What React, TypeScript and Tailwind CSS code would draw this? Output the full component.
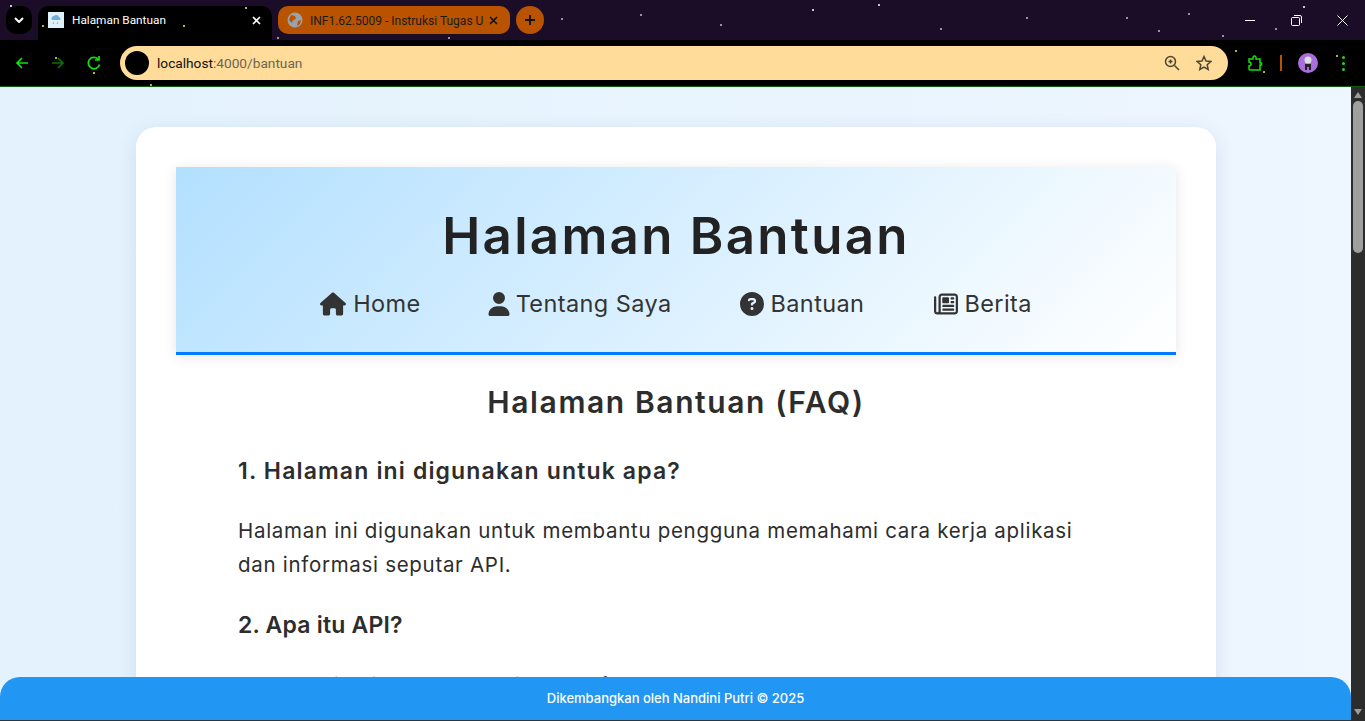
import { FaCircleQuestion, FaHouse, FaRegNewspaper, FaUser } from 'react-icons/fa6';

// stars behind the browser theme
const stars = [
    [10, 5, 'bg-white'], [42, 25, 'bg-[#e6f542]'], [97, 26, 'bg-[#e6f542]'], [183, 25, 'bg-[#e6f542]'], [245, 7, 'bg-[#e6f542]'],
    [55, 57, 'bg-[#e6f542]'], [93, 72, 'bg-[#e6f542]'], [150, 84, 'bg-[#e6f542]'], [1235, 50, 'bg-[#e6f542]'], [1263, 71, 'bg-[#e6f542]'], [1336, 55, 'bg-[#e6f542]'],
    [277, 37, 'bg-[#c9b8dc]'], [448, 37, 'bg-[#c9b8dc]'], [561, 18, 'bg-[#c9b8dc]'], [640, 14, 'bg-[#c9b8dc]'], [720, 24, 'bg-[#c9b8dc]'],
    [812, 9, 'bg-white'], [878, 4, 'bg-white'], [940, 28, 'bg-[#c9b8dc]'], [1026, 17, 'bg-[#c9b8dc]'], [1126, 17, 'bg-[#c9b8dc]'],
    [1158, 30, 'bg-[#c9b8dc]'], [1188, 13, 'bg-[#c9b8dc]'], [1222, 35, 'bg-[#c9b8dc]'], [1275, 28, 'bg-[#c9b8dc]'], [1303, 6, 'bg-white'],
] as const;

function TabBar() {
    return (
        <div className="flex h-10 shrink-0 items-start bg-[#1b0d28] pl-[6px] pt-[6px]">
            <div className="flex h-[28px] w-[26px] items-center justify-center rounded-[10px] bg-black">
                <svg width="10" height="6" viewBox="0 0 10 6" fill="none" stroke="white" strokeWidth="2"><path d="M1 1l4 4 4-4" /></svg>
            </div>
            <div className="ml-[6px] flex h-[34px] w-[234px] items-center rounded-t-[10px] bg-black pb-[6px] pl-[10px] pr-[11px]">
                <div className="flex h-4 w-4 items-center justify-center bg-[#dff1fb]">
                    <svg width="14" height="14" viewBox="0 0 14 14"><path d="M3 7a2.500 2.500 0 0 1 2-4 3 3 0 0 1 5 1 2 2 0 0 1 1 3z" fill="#6fb1d8" /><path d="M5 9l-1 2M9 9l-1 2" stroke="#e0a030" strokeWidth="1" /></svg>
                </div>
                <span className="ml-2 mt-px flex-1 font-['Roboto',sans-serif] text-[11.800px] text-white">Halaman Bantuan</span>
                <svg width="9" height="9" viewBox="0 0 9 9" stroke="white" strokeWidth="1.600"><path d="M1 1l7 7M8 1l-7 7" /></svg>
            </div>
            <div className="ml-[6px] flex h-[28px] w-[232px] items-center rounded-[10px] bg-[#b95300] pl-[9px] pr-[12px]">
                <svg width="16" height="16" viewBox="0 0 16 16"><circle cx="8" cy="8" r="7.500" fill="#9aa3ac" /><path d="M4 3l4 1 1 3-3 1-1 3-3-3zM11 9l3-1-1 4-3 2z" fill="#b95300" /></svg>
                <span className="ml-[7px] mt-px flex-1 overflow-hidden whitespace-nowrap font-['Roboto',sans-serif] text-xs text-[#1b1b1b]">INF1.62.5009 - Instruksi Tugas U</span>
                <svg width="9" height="9" viewBox="0 0 9 9" stroke="#111" strokeWidth="1.600"><path d="M1 1l7 7M8 1l-7 7" /></svg>
            </div>
            <div className="ml-[6px] flex h-[28px] w-[28px] items-center justify-center rounded-full bg-[#b95300]">
                <svg width="12" height="12" viewBox="0 0 12 12" stroke="#111" strokeWidth="1.800"><path d="M6 1v10M1 6h10" /></svg>
            </div>
            <div className="ml-auto flex items-center">
                <div className="flex h-[28px] w-[46px] items-center justify-center">
                    <span className="h-px w-[10px] bg-white" />
                </div>
                <div className="flex h-[28px] w-[46px] items-center justify-center">
                    <svg width="11" height="11" viewBox="0 0 11 11" fill="none" stroke="white"><rect x="0.5" y="2.5" width="8" height="8" rx="1" /><path d="M3 .5h6a1.500 1.500 0 0 1 1.500 1.500v6" /></svg>
                </div>
                <div className="flex h-[28px] w-[46px] items-center justify-center">
                    <svg width="11" height="11" viewBox="0 0 11 11" stroke="white"><path d="M.5.5l10 10M10.500.5l-10 10" /></svg>
                </div>
            </div>
        </div>
    );
}

function AddressBar() {
    return (
        <div className="flex h-[47px] shrink-0 items-start border-b border-[#0e5c0e] bg-black pt-[6px]">
            <div className="flex h-[34px] w-[120px] items-center pl-[14px] text-[#16e00e]">
                <svg width="16" height="16" viewBox="0 0 16 16" fill="none" stroke="currentColor" strokeWidth="1.700"><path d="M14 8H3M8 3L3 8l5 5" /></svg>
                <svg className="ml-[20px] opacity-50" width="16" height="16" viewBox="0 0 16 16" fill="none" stroke="currentColor" strokeWidth="1.700"><path d="M2 8h11M8 3l5 5-5 5" /></svg>
                <svg className="ml-[20px]" width="16" height="16" viewBox="0 0 16 16" fill="none" stroke="currentColor" strokeWidth="1.700"><path d="M13.500 9.500A5.700 5.700 0 1 1 12 4M13 1v4H9" /></svg>
            </div>
            <div className="flex h-[34px] w-[1108px] items-center rounded-full bg-[#ffdc9a] pl-[5px] pr-[16px]">
                <span className="h-6 w-6 rounded-full bg-black" />
                <span className="ml-2 flex-1 font-['Roboto',sans-serif] text-[13.700px] text-[#111]">
                    localhost<span className="text-[#6d6552]">:4000/bantuan</span>
                </span>
                <svg width="16" height="16" viewBox="0 0 16 16" fill="none" stroke="#4d4636" strokeWidth="1.500"><circle cx="6.500" cy="6.500" r="5" /><path d="M10.500 10.500L15 15M4.500 6.500h4M6.500 4.500v4" /></svg>
                <svg className="ml-[16px]" width="16" height="16" viewBox="0 0 16 16" fill="none" stroke="#4d4636" strokeWidth="1.500"><path d="M8 1.500l2 4.500 4.800.500-3.600 3.200 1 4.800L8 12.200 3.800 14.500l1-4.800L1.200 6.500 6 6z" /></svg>
            </div>
            <div className="flex h-[34px] flex-1 items-center pl-[19px]">
                <svg width="16" height="17" viewBox="0 0 16 17" fill="none" stroke="#16e00e" strokeWidth="1.500"><path d="M2 4h4V2.500a1.300 1.300 0 0 1 3 0V4h4v4h1.500v2H13v5H3a1 1 0 0 1-1-1v-3a2 2 0 0 0 0-4z" /></svg>
                <span className="ml-[17px] h-4 w-[2px] bg-[#b95300]" />
                <span className="ml-[16px] flex h-5 w-5 items-center justify-center rounded-full bg-[#a86fdc]">
                    <svg width="12" height="14" viewBox="0 0 12 14"><circle cx="6" cy="4" r="3.500" fill="#ddd" /><path d="M3 8h6v6H7V11H5v3H3z" fill="#222" /></svg>
                </span>
                <span className="ml-[24px] flex flex-col gap-[3px]">
                    <span className="h-[3px] w-[3px] rounded-full bg-[#16e00e]" />
                    <span className="h-[3px] w-[3px] rounded-full bg-[#16e00e]" />
                    <span className="h-[3px] w-[3px] rounded-full bg-[#16e00e]" />
                </span>
            </div>
        </div>
    );
}

function Scrollbar() {
    return (
        <div className="flex w-[14px] shrink-0 flex-col items-center bg-[#2c2c2c] pt-[5px]">
            <span className="h-0 w-0 border-x-[4.500px] border-b-[6px] border-x-transparent border-b-[#9c9c9c]" />
            <span className="mt-[3px] h-[152px] w-[10px] rounded-full bg-[#9f9f9f]" />
            <span className="mb-[6px] mt-auto h-0 w-0 border-x-[4.500px] border-t-[6px] border-x-transparent border-t-[#9c9c9c]" />
        </div>
    );
}

const navItems = [
    { label: 'Home', icon: <FaHouse size={26} />, cls: 'gap-[7px]' },
    { label: 'Tentang Saya', icon: <FaUser size={24} />, cls: 'gap-[5px] -ml-[2px]' },
    { label: 'Bantuan', icon: <FaCircleQuestion size={24} />, cls: 'gap-[6px] ml-px' },
    { label: 'Berita', icon: <FaRegNewspaper size={24} />, cls: 'gap-[6px] ml-[2px]' },
];

export default function App() {
    return (
        <div className="flex h-[721px] w-[1365px] flex-col overflow-hidden font-['Inter',sans-serif]">
            <div className="relative shrink-0">
                <TabBar />
                <AddressBar />
                {stars.map(([x, y, color]) => (
                    <span key={`${x}-${y}`} className={`absolute h-[2px] w-[2px] rounded-full ${color}`} style={{ left: x, top: y }} />
                ))}
            </div>
            <div className="relative flex min-h-0 flex-1">
                <main className="min-w-0 flex-1 overflow-hidden bg-gradient-to-r from-[#e3f2fd] to-[#eef6ff] pl-[136px] pr-[135px] pt-10">
                    <div className="rounded-[20px] bg-white p-10 shadow-[0_4px_20px_rgba(0,60,120,0.1)]">
                        <header className="border-b-[3px] border-[#007bff] bg-[linear-gradient(135deg,#b3e0ff,#ffffff)] pb-[30px] pt-[31px] text-center shadow-[0_2px_12px_rgba(0,0,0,0.1)]">
                            <h1 className="text-[51px] font-semibold leading-[76px] tracking-[2.3px] text-[#222]">Halaman Bantuan</h1>
                            <nav className="mt-3 flex justify-center gap-[68px] text-[#333]">
                                {navItems.map((item) => (
                                    <a key={item.label} className={`flex h-9 items-center text-[23.500px] tracking-[0.4px] ${item.cls}`}>
                                        {item.icon}
                                        {item.label}
                                    </a>
                                ))}
                            </nav>
                        </header>
                        <section className="px-[62px] text-[#2d2d2d]">
                            <h2 className="mt-[25px] text-center text-[30px] font-semibold leading-[44px] tracking-[1.6px]">Halaman Bantuan (FAQ)</h2>
                            <h3 className="mt-[29px] text-[23px] font-semibold leading-9 tracking-[1.15px]">1. Halaman ini digunakan untuk apa?</h3>
                            <p className="mt-[25px] pr-6 text-[20.500px] leading-[34px] tracking-[0.7px]">
                                Halaman ini digunakan untuk membantu pengguna memahami cara kerja aplikasi dan informasi seputar API.
                            </p>
                            <h3 className="mt-[25px] text-[23px] font-semibold leading-9 tracking-[0.2px]">2. Apa itu API?</h3>
                            <p className="mt-[26px] whitespace-nowrap text-[20.500px] leading-[34px] tracking-[0.63px]">
                                API (Application Programming Interface) adalah
                            </p>
                        </section>
                    </div>
                </main>
                <Scrollbar />
                {/* fixed footer lies over the page */}
                <footer className="absolute bottom-0 left-0 right-[14px] flex h-11 items-center justify-center rounded-t-[20px] border-b border-[#333] bg-[#2196f3] text-[13px] font-medium text-white">
                    Dikembangkan oleh Nandini Putri © 2025
                </footer>
            </div>
        </div>
    );
}
